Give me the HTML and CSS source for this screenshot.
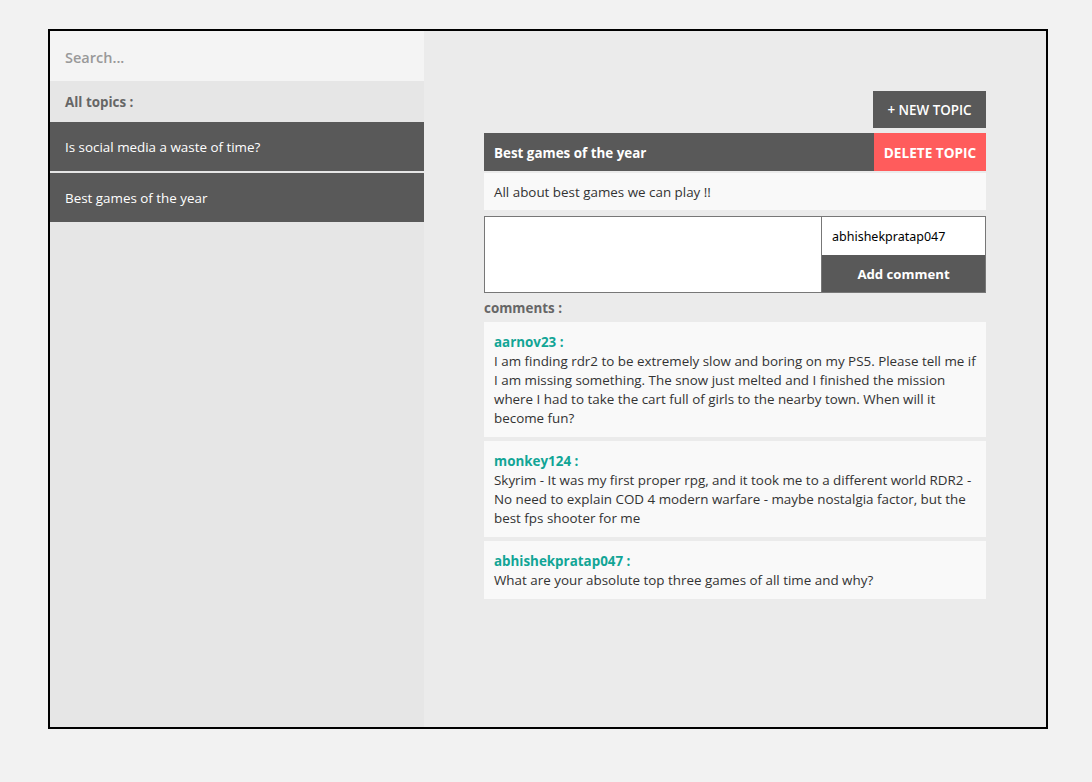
FILE: index.html
```html
<!DOCTYPE html>
<html>
<head>
<meta charset="utf-8">
<link rel="stylesheet" href="styles.css">
</head>
<body>
<div class="app">
  <aside class="sidebar">
    <div class="search">Search...</div>
    <div class="all-topics">All topics :</div>
    <div class="topic">Is social media a waste of time?</div>
    <div class="topic">Best games of the year</div>
  </aside>
  <main class="main">
    <div class="content">
      <div class="toolbar"><button class="new-topic">+ NEW TOPIC</button></div>
      <div class="topic-head">
        <div class="topic-title">Best games of the year</div>
        <button class="delete-topic">DELETE TOPIC</button>
      </div>
      <div class="topic-desc">All about best games we can play !!</div>
      <div class="comment-form">
        <div class="comment-text"></div>
        <div class="comment-side">
          <div class="comment-user">abhishekpratap047</div>
          <button class="add-comment">Add comment</button>
        </div>
      </div>
      <div class="comments-label">comments :</div>
      <div class="comments">
        <div class="comment">
          <div class="comment-author">aarnov23 :</div>
          <div class="comment-body">I am finding rdr2 to be extremely slow and boring on my PS5. Please tell me if I am missing something. The snow just melted and I finished the mission where I had to take the cart full of girls to the nearby town. When will it become fun?</div>
        </div>
        <div class="comment">
          <div class="comment-author">monkey124 :</div>
          <div class="comment-body">Skyrim - It was my first proper rpg, and it took me to a different world RDR2 - No need to explain COD 4 modern warfare - maybe nostalgia factor, but the best fps shooter for me</div>
        </div>
        <div class="comment">
          <div class="comment-author">abhishekpratap047 :</div>
          <div class="comment-body">What are your absolute top three games of all time and why?</div>
        </div>
      </div>
    </div>
  </main>
</div>
</body>
</html>
```
FILE: styles.css
```css
* { box-sizing: border-box; }
html, body { margin: 0; padding: 0; }
body {
  background: #f2f2f2;
  font-family: "Open Sans", "Noto Sans", sans-serif;
  font-size: 13.4px;
  color: #333;
}
.app {
  display: flex;
  width: 1000px;
  height: 700px;
  margin: 29px 0 0 48px;
  border: 2px solid #000;
}
.sidebar {
  width: 374px;
  flex: none;
  background: #e6e6e6;
  display: flex;
  flex-direction: column;
}
.search {
  height: 50px;
  background: #f4f4f4;
  padding: 2px 15px 0 15px;
  display: flex;
  align-items: center;
  font-size: 14.5px;
  font-weight: 600;
  color: #999;
}
.all-topics {
  height: 41px;
  padding: 0 15px;
  display: flex;
  align-items: center;
  font-weight: 700;
  color: #666;
}
.topic {
  height: 49px;
  background: #595959;
  color: #fff;
  padding: 0 15px;
  display: flex;
  align-items: center;
  margin-bottom: 2px;
}
.main {
  flex: 1;
  background: #ebebeb;
  padding: 60px 0 0 60px;
}
.content {
  width: 502px;
  display: flex;
  flex-direction: column;
}
.toolbar {
  display: flex;
  justify-content: flex-end;
  margin-bottom: 5px;
}
button {
  font-family: inherit;
  border: none;
  cursor: pointer;
}
.new-topic {
  width: 113px;
  height: 37px;
  background: #595959;
  color: #fff;
  font-size: 13.4px;
  font-weight: 600;
  padding-top: 2px;
}
.topic-head {
  display: flex;
  height: 38px;
  background: #595959;
  color: #fff;
}
.topic-title {
  flex: 1;
  display: flex;
  align-items: center;
  padding: 2px 10px 0;
  font-weight: 700;
}
.delete-topic {
  width: 112px;
  background: #ff5c5c;
  color: #fff;
  font-size: 13.6px;
  font-weight: 700;
  padding-top: 2px;
}
.topic-desc {
  margin-top: 2px;
  height: 37px;
  background: #f9f9f9;
  padding: 0 10px;
  display: flex;
  align-items: center;
}
.comment-form {
  margin-top: 6px;
  display: flex;
  height: 77px;
  border: 1px solid #777;
}
.comment-text {
  flex: 1;
  background: #fff;
  border-right: 1px solid #777;
}
.comment-side {
  width: 163px;
  display: flex;
  flex-direction: column;
}
.comment-user {
  height: 38px;
  background: #fff;
  padding: 0 10px;
  display: flex;
  align-items: center;
  color: #000;
  font-family: "Noto Sans", sans-serif;
  font-size: 12.5px;
}
.add-comment {
  flex: 1;
  background: #595959;
  color: #fff;
  font-size: 13.2px;
  font-weight: 700;
}
.comments-label {
  margin-top: 6px;
  height: 23px;
  line-height: 18px;
  font-weight: 700;
  color: #666;
}
.comments {
  display: flex;
  flex-direction: column;
  gap: 4px;
}
.comment {
  background: #f9f9f9;
  padding: 11px 10px 9px;
  line-height: 19px;
}
.comment-author {
  font-weight: 700;
  color: #12a596;
}
```
